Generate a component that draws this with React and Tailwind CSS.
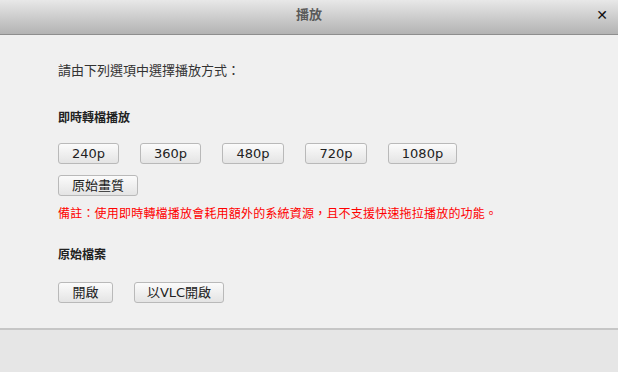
const FONT = { fontFamily: '"DejaVu Sans", "Noto Sans CJK TC", sans-serif' };

const RES = [
  { label: '240p', w: 'w-[61px]' },
  { label: '360p', w: 'w-[61px]' },
  { label: '480p', w: 'w-[62px]' },
  { label: '720p', w: 'w-[62px]' },
  { label: '1080p', w: 'w-[69px]' },
];

function Btn({ children, className = '' }) {
  return (
    <button
      type="button"
      className={`h-[21px] rounded-[3px] border border-[#b9b9b9] bg-gradient-to-b from-[#fbfbfb] to-[#e4e4e4] text-[13px] leading-none text-[#222] ${className}`}
    >
      {children}
    </button>
  );
}

export default function App() {
  return (
    <div className="flex h-[372px] w-[618px] flex-col bg-[#f0f0f0]" style={FONT}>
      <div className="relative flex h-[35px] items-center justify-center border-b border-[#8e8e8e] bg-gradient-to-b from-[#e8e8e8] to-[#b3b3b3]">
        <span className="pb-[4px] text-[13px] font-bold text-[#5a5a5a]">播放</span>
        <span className="absolute right-[10px] top-[5px] text-[14px] font-bold text-[#111]">✕</span>
      </div>

      <div className="flex-1 px-[58px]">
        <p className="mt-[26px] text-[13px] text-[#333]">請由下列選項中選擇播放方式：</p>
        <p className="mt-[28px] text-[12px] font-bold text-[#222]">即時轉檔播放</p>

        <div className="mt-[16px] flex gap-[21px]">
          {RES.map((r) => (
            <Btn key={r.label} className={r.w}>
              {r.label}
            </Btn>
          ))}
        </div>
        <Btn className="mt-[11px] w-[80px]">原始畫質</Btn>
        <p className="mt-[8px] text-[12px] tracking-[0.2px] text-[#f00]">
          備註：使用即時轉檔播放會耗用額外的系統資源，且不支援快速拖拉播放的功能。
        </p>

        <p className="mt-[23px] text-[12px] font-bold text-[#222]">原始檔案</p>
        <div className="mt-[18px] flex gap-[21px]">
          <Btn className="w-[55px]">開啟</Btn>
          <Btn className="w-[90px]">以VLC開啟</Btn>
        </div>
      </div>

      <div className="h-[44px] border-t-2 border-[#c6c6c6] bg-[#e6e6e6]" />
    </div>
  );
}
